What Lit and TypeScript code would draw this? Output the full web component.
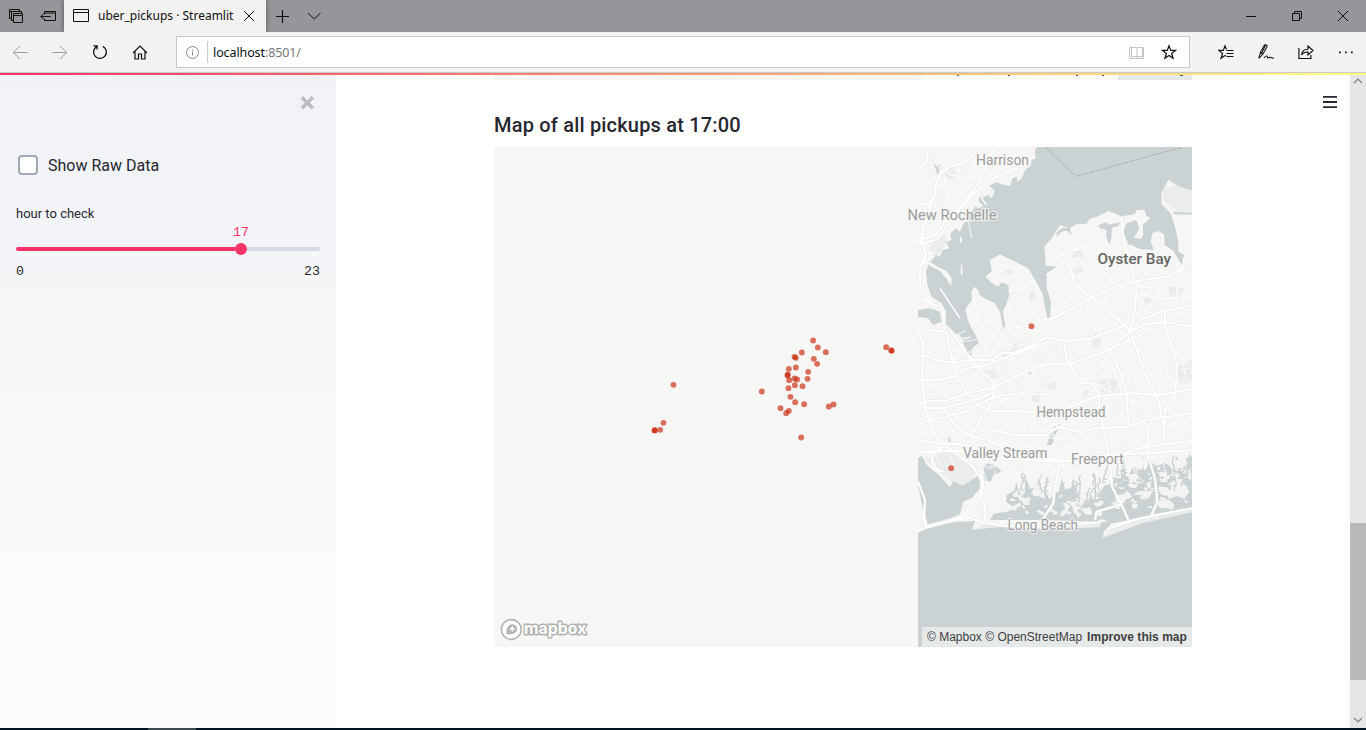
import { LitElement, html, svg, css } from "lit";
import { customElement } from "lit/decorators.js";

type Pt = [number, number];

/* Small deterministic generator for the fine map texture. */
function rng(seed: number) {
  let s = seed;
  return () => {
    s = (s * 1664525 + 1013904223) % 4294967296;
    return s / 4294967296;
  };
}

/* Map artwork is drafted at three times its size; the origin is (900,145). */
const SOUND =
  "M410 6L404 20L408 40L395 45L392 62L375 75L365 100L350 112L352 95L338 100L330 122L305 118L290 112L268 122L284 140L274 160L262 150L250 158L238 148L236 168L250 182L238 190L225 185L215 200L200 205L204 222L188 240L180 262L168 250L150 268L155 285L140 292L148 310L128 315L120 335L104 328L98 345L90 352L128 372L142 380L155 400L154 424L146 412L132 392L118 375L100 366L86 358L78 380L82 420L95 455L125 475L138 500L138 538L172 570L180 570L195 606L208 634L216 630L218 608L236 594L228 572L212 545L202 520L196 495L204 480L216 466L214 440L222 425L235 435L240 452L265 465L285 475L300 500L310 555L316 540L308 500L318 480L328 450L325 420L305 412L294 425L276 415L256 395L275 378L270 345L300 328L345 350L385 370L402 400L425 440L434 480L442 520L450 515L453 470L440 430L440 385L470 365L438 362L433 305L455 280L480 240L508 250L530 238L560 236L568 222L590 215L625 198L665 214L702 208L712 195L735 196L738 212L752 218L738 232L728 238L730 270L722 282L702 278L718 250L708 225L680 235L670 260L686 300L720 312L762 315L752 290L757 264L775 258L792 268L794 300L820 318L836 345L850 362L852 330L835 320L835 290L825 245L812 205L785 178L784 145L805 105L840 125L876 136L876 6Z";

const OCEAN =
  "M54 1165L82 1150L160 1132L225 1128L216 1154L300 1146L440 1155L600 1146L603 1132L640 1128L612 1160L608 1178L680 1152L720 1136L876 1102L876 1506L54 1506Z";

const BAYS = [
  "M54 940L66 932L80 960L110 985L142 1018L150 1026L160 1008L188 1022L215 1005L238 990L240 1030L215 1060L190 1070L180 1108L150 1120L84 1138L66 1080L54 1020Z",
  "M250 970L262 955L290 962L304 980L280 990L272 1010L254 1006Z",
  "M320 1050L345 1035L348 1010L356 1035L374 1030L380 1003L390 1032L412 1022L416 998L424 1036L444 1050L476 1040L486 1000L494 1034L514 1028L519 1005L528 1046L560 1042L574 1062L600 1048L612 1022L640 1014L640 996L662 1002L684 994L700 966L722 976L740 972L748 946L766 962L786 958L792 936L808 954L822 950L830 934L844 954L862 938L876 936L876 1095L700 1122L640 1135L605 1122L590 1130L440 1125L270 1125L282 1106L320 1100L345 1090L318 1070Z",
  "M54 495L90 490L120 500L124 530L100 540L84 520L54 515Z",
  "M108 75L100 55L112 66L120 58L120 75L112 90Z",
  "M595 240L620 232L625 240L660 232L655 244L636 248L634 280L628 298L618 275L620 255L600 250Z",
  "M470 262L485 250L510 248L514 270L500 256L482 262L470 276Z",
  "M440 900L446 880L462 845L482 838L470 860L455 900Z",
  "M820 200L876 203L876 209L820 208Z",
  "M310 630L320 630L320 642L310 642Z",
  "M385 680L394 680L392 688L386 688Z",
  "M144 885L148 872L153 885L149 895Z",
];

const MAJOR = [
  "M54 175L80 180L102 160L108 120L120 85L150 65L200 50L220 30L235 10",
  "M60 300L75 230L95 170L106 150",
  "M54 290L110 265L140 225L200 165L230 120L250 80L270 30L290 8",
  "M54 302L112 282L150 230L215 150L280 100L350 70L375 45",
  "M54 70L72 60L82 40L84 6",
  "M60 360L80 350L90 335L105 335",
  "M70 240L66 290L78 330L60 370L60 420L75 455L100 478L125 485L130 495L132 560",
  "M54 458L100 478",
  "M482 348L500 352L512 372L525 420L575 458L600 478L640 510L690 558L712 620L740 700L778 770L790 845",
  "M440 528L480 510L520 488L570 460L650 425L700 410L800 395L850 372L852 340L876 325",
  "M665 220L666 250L675 300L690 345L700 390L710 420L705 500L688 560L630 615",
  "M325 555L340 548L390 542L440 520",
  "M690 560L730 520L790 500L876 480",
  "M700 555L740 537L800 532L876 545",
  "M795 490L795 540L800 560L820 615L832 660L824 755L796 795L790 885",
  "M54 550L70 600L66 690L75 790L110 880L115 900",
  "M54 638L80 632L110 648L170 652L210 645L280 645L300 625L340 623L400 600L440 577L500 587L570 582L610 565L680 540",
  "M492 585L500 645L515 665L536 712L580 716L596 750L600 805L620 895L630 955L636 1025L665 1080L685 1125",
  "M54 705L110 705L160 695L200 670L260 660L310 640L350 626L440 592",
  "M54 775L90 767L140 767L200 745L270 730L360 690L430 660L515 655L600 625L700 580L760 550",
  "M80 555L140 560L150 615L170 695L200 745L240 785L280 797L400 800",
  "M150 555L200 625L250 685L285 715L275 775L240 825L215 875",
  "M54 840L80 828L200 800L260 765L300 752L370 744",
  "M75 790L130 790L160 835L215 876L260 884L320 912",
  "M120 790L200 772L250 755L285 740",
  "M280 855L340 870L440 870L475 845L540 863L580 850L680 845L740 825L876 804",
  "M54 885L110 895L180 898L260 918L380 935L480 945L540 955L640 935L740 905L876 888",
  "M54 920L190 918L290 940L480 950L620 930L740 925L876 915",
  "M140 905L180 935L220 965L245 1005L250 1020L240 1045L255 1085L255 1130",
  "M130 905L100 925L95 945L110 975L130 980",
  "M480 800L560 765L600 752L700 745L780 750L876 732",
  "M630 615L650 655L680 745L685 835L700 845",
  "M730 825L745 855L745 935L765 1000L772 1070L755 1110",
  "M54 1010L75 1065L72 1120L80 1145",
  "M54 1155L160 1125L210 1118L250 1133L300 1141L400 1147L600 1132",
  "M240 975L250 1015L245 1045L210 1080L195 1110L155 1126",
  "M480 955L465 1025L460 1075L430 1120",
  "M585 1125L590 1100L665 1078",
  "M635 1148L700 1125L760 1112L876 1090",
];

const MINOR = [
  "M275 350L320 365L350 375L365 440L385 490L402 502L402 540",
  "M325 440L360 430L405 405M330 470L330 500L315 520",
  "M365 440L400 410L430 460M400 500L430 550",
  "M260 470L265 505L250 540L262 600M285 490L300 560",
  "M225 470L235 510L215 540",
  "M440 390L470 370L520 320L580 280L590 225",
  "M460 340L530 310L580 300L600 305L625 320L700 350",
  "M520 340L500 400L495 450L505 500L480 560",
  "M560 380L530 440L470 500L440 560",
  "M615 420L615 500L580 560L560 620",
  "M700 410L640 440L590 500",
  "M790 395L770 450L740 500L760 560",
  "M845 375L830 440L835 520",
  "M130 80L150 190M200 55L215 120L260 180",
  "M85 30L120 45L150 90L230 100",
  "M120 430L180 520M90 360L130 380L150 405",
  "M690 300L740 330L790 360",
  "M600 350L620 400L690 440L780 460L876 455",
  "M710 425L780 430L850 410",
  "M715 625L665 705L660 760M715 630L790 750",
  "M280 555L300 600L260 640M350 555L360 620",
  "M360 748L460 748M360 740L400 780L405 840",
  "M540 700L600 720L650 760M610 600L660 720",
];

const PARKS = [
  "M145 65L165 75L170 90L150 105L130 95Z",
  "M95 285L135 270L145 290L115 330L90 315Z",
  "M785 135L850 110L876 140L876 200L830 200L795 170Z",
  "M590 682L605 700L655 705L650 735L615 750L598 725Z",
  "M835 655L876 645L876 710L845 720L832 700Z",
  "M340 595L360 590L380 610L350 630L335 620Z",
  "M570 575L590 560L605 590L585 610Z",
  "M440 715L465 710L470 735L445 735Z",
  "M395 750L415 748L420 770L396 770Z",
  "M548 740L565 732L575 755L550 760Z",
  "M78 945L140 910L230 965L220 1005L180 1030Z",
  "M250 680L285 672L295 700L265 705Z",
  "M390 440L402 430L406 460L392 470Z",
  "M520 370L545 362L550 380L525 390Z",
  "M805 420L850 430L840 460L810 455Z",
  "M520 320L550 315L548 335L515 338Z",
  "M315 375L335 370L340 385L325 390Z",
  "M730 460L750 455L755 470L735 478Z",
  "M216 1154L260 1136L320 1146L600 1130L602 1145L440 1158Z",
  "M608 1178L640 1144L720 1125L876 1090L876 1104L720 1138Z",
];

/* Local streets: short, loosely gridded strokes with a lean that varies by area. */
function streets(): string {
  const r = rng(7);
  let d = "";
  const add = (x0: number, y0: number, x1: number, y1: number, n: number, len: number) => {
    for (let i = 0; i < n; i++) {
      const x = x0 + r() * (x1 - x0);
      const y = y0 + r() * (y1 - y0);
      const lean = -0.25 + (r() - 0.5) * 0.3 + (r() < 0.5 ? 0 : Math.PI / 2);
      const l = len * (0.4 + r());
      const bend = (r() - 0.5) * 10;
      const dx = Math.cos(lean) * l;
      const dy = Math.sin(lean) * l;
      d += `M${x.toFixed(0)} ${y.toFixed(0)}q${(dx / 2 + bend).toFixed(0)} ${(dy / 2 + bend).toFixed(0)} ${dx.toFixed(0)} ${dy.toFixed(0)}`;
    }
  };
  add(54, 600, 876, 930, 330, 70);
  add(240, 900, 480, 990, 45, 45);
  add(480, 890, 740, 960, 40, 40);
  add(460, 380, 860, 600, 60, 60);
  add(54, 20, 200, 260, 22, 60);
  add(54, 560, 180, 620, 14, 50);
  return d;
}

/* Salt-marsh islands: ragged blobs snapped to a coarse cell. */
function marsh(): string {
  const r = rng(41);
  let d = "";
  const snap = (v: number) => Math.round(v / 3) * 3;
  const island = (x: number, y: number, rx: number, ry: number) => {
    const n = 9;
    const tilt = (r() - 0.5) * 1.6;
    for (let i = 0; i < n; i++) {
      const a = (i / n) * Math.PI * 2;
      const k = 0.45 + r() * 0.75;
      const px = Math.cos(a) * rx * k;
      const py = Math.sin(a) * ry * k;
      const qx = x + px * Math.cos(tilt) - py * Math.sin(tilt);
      const qy = y + px * Math.sin(tilt) + py * Math.cos(tilt);
      d += `${i ? "L" : "M"}${snap(qx)} ${snap(qy)}`;
    }
    d += "Z";
  };
  const area = (x0: number, x1: number, y0: number, y1: number, n: number, size: number) => {
    for (let i = 0; i < n; i++) {
      const s = size * (0.35 + r() * r() * 1.4);
      island(x0 + r() * (x1 - x0), y0 + r() * (y1 - y0), s * (0.8 + r() * 0.7), s * (0.5 + r() * 0.4));
    }
  };
  area(335, 470, 1035, 1105, 24, 17);
  area(480, 600, 1045, 1110, 26, 15);
  area(640, 760, 1000, 1090, 34, 15);
  area(775, 870, 950, 1085, 26, 19);
  area(690, 870, 970, 1010, 16, 12);
  return d;
}

function creeks(): string {
  const r = rng(99);
  let d = "";
  for (let i = 0; i < 34; i++) {
    const x = Math.round(345 + r() * 525);
    const y = Math.round((x < 600 ? 1035 : 985) - r() * 60);
    d += `M${x} ${y}`;
    for (let j = 0; j < 4; j++) {
      const side = Math.round((r() - 0.5) * 16);
      d += `l${side} 6v${Math.round(4 + r() * 9)}`;
      if (r() > 0.6) d += `h${side > 0 ? -9 : 9}m${side > 0 ? 9 : -9} 0`;
    }
  }
  return d;
}

const STREETS = streets();
const MARSH = marsh();
const CREEKS = creeks();

const PICKUPS: Pt[] = [
  [519, 46], [533, 67], [557, 81], [485, 82], [463, 95], [467, 98], [521, 101], [531, 116],
  [467, 127], [446, 131], [442, 151], [443, 148], [504, 140], [463, 160], [471, 163],
  [447, 165], [502, 161], [464, 180], [487, 183], [445, 189], [451, 215], [465, 231], [492, 237],
  [421, 249], [446, 257], [438, 264], [566, 244], [580, 238], [483, 337], [365, 199], [100, 179],
  [70, 293], [60, 314], [43, 315], [44, 316], [738, 66], [753, 75], [755, 77],
  [1174, 3], [933, 429],
];

const LABELS: { t: string; x: number; y: number; w: number; big?: boolean }[] = [
  { t: "Harrison", x: 976, y: 164.5, w: 53 },
  { t: "New Rochelle", x: 907.5, y: 220, w: 89 },
  { t: "Oyster Bay", x: 1097.5, y: 264, w: 73.5, big: true },
  { t: "Hempstead", x: 1036.5, y: 417, w: 69 },
  { t: "Valley Stream", x: 963, y: 457.5, w: 84.5 },
  { t: "Freeport", x: 1071, y: 464, w: 52.5 },
  { t: "Long Beach", x: 1007.5, y: 530, w: 70.5 },
];

@customElement("pickup-map")
class PickupMap extends LitElement {
  static styles = css`
    :host { display: grid; width: 698px; height: 500px; background: #f6f6f4; }
    .layer { grid-area: 1 / 1; }
    svg { display: block; }
    .label { font-family: Roboto, "Noto Sans", sans-serif; font-size: 14px; fill: #9d9d9f; stroke: #f6f6f4; stroke-opacity: .8; stroke-width: 2.4px; paint-order: stroke; stroke-linejoin: round; }
    .label.big { font-size: 15.5px; font-weight: 500; fill: #666; }
    .brand { font-family: Inter, sans-serif; font-size: 16.5px; font-weight: 700; fill: #fff; stroke: #b0b0af; stroke-width: 2.8px; paint-order: stroke; stroke-linejoin: round; }
    .credit { place-self: end; display: flex; align-items: center; gap: 5px; box-sizing: border-box; width: 270px; height: 20px; padding-left: 5px; background: #e5e9ea; font: 12px/20px "Liberation Sans", sans-serif; color: #404040; white-space: nowrap; z-index: 1; }
    .credit b { letter-spacing: .03px; }
  `;

  render() {
    return html`
      <svg class="layer" width="698" height="500" viewBox="494 147 698 500">
        <defs><clipPath id="tile"><rect x="918" y="147" width="274" height="500"></rect></clipPath></defs>
        <g clip-path="url(#tile)">
          <g transform="translate(900 145) scale(.33333)" fill="none" stroke-linejoin="round">
            ${PARKS.map((d) => svg`<path d=${d} fill="#eaedec"></path>`)}
            <path d=${SOUND} fill="#cad2d4"></path>
            <path d=${OCEAN} fill="#cad2d4"></path>
            ${BAYS.map((d) => svg`<path d=${d} fill="#cad2d4"></path>`)}
            <path d="M180 275h6v18h-6zM182 355l6 10v26h-6zM272 125l12 12-8 18-18-12zM330 488h6v8h-6z" fill="#f3f4f3"></path>
            <path d=${MARSH} fill="#f3f4f2"></path>
            <path d=${CREEKS} stroke="#cad2d4" stroke-width="4"></path>
            <path d=${STREETS} stroke="#e9eceb" stroke-width="4.5" opacity=".5"></path>
            <path d=${STREETS} stroke="#fff" stroke-width="2.4" opacity=".75"></path>
            <path d=${MINOR.join("")} stroke="#e6eaea" stroke-width="6" opacity=".6"></path>
            <path d=${MINOR.join("")} stroke="#fff" stroke-width="3.6"></path>
            <path d=${MAJOR.join("")} stroke="#e3e8e8" stroke-width="9.5" opacity=".65"></path>
            <path d=${MAJOR.join("")} stroke="#fff" stroke-width="5.8"></path>
            <path d="M436 6L528 94L845 7" stroke="#b0aeb0" stroke-width="2.8" stroke-dasharray="18 3"></path>
          </g>
        </g>
        ${LABELS.map((l) => svg`<text class=${l.big ? "label big" : "label"} x=${l.x} y=${l.y} textLength=${l.w} lengthAdjust="spacingAndGlyphs">${l.t}</text>`)}
        ${PICKUPS.map(([x, y]) => svg`<circle cx=${640 + (x + 0.5) / 3} cy=${325 + (y + 0.5) / 3} r="2.9" fill="#c81e00" fill-opacity=".63"></circle>`)}
        <circle cx="511.300" cy="629.500" r="9.900" fill="#fff" stroke="#b4b4b3" stroke-width="1.600"></circle>
        <path d="M506.700 634.200c-.7-4 .2-7.300 2.600-9 2.200-1.500 5-1.200 6.600.6 1.700 1.900 1.600 4.700-.3 6.500-2.100 2-5.200 2.500-8.900 1.900z" fill="#b4b4b3"></path>
        <path d="M512.300 625.500l1.100 2.400 2.400 1-2.400 1.100-1.100 2.400-1.100-2.400-2.400-1.100 2.400-1z" fill="#fff"></path>
        <text class="brand" x="524" y="634" textLength="62.500" lengthAdjust="spacingAndGlyphs">mapbox</text>
      </svg>
      <div class="layer credit"><span>© Mapbox © OpenStreetMap</span><b>Improve this map</b></div>
    `;
  }
}

const icon = (body: unknown, w = 16, h = 16) =>
  html`<svg width=${w} height=${h} viewBox="0 0 ${w} ${h}" fill="none" stroke="currentColor" stroke-width="1">${body}</svg>`;

@customElement("browser-chrome")
class BrowserChrome extends LitElement {
  static styles = css`
    :host { display: block; font-family: "Noto Sans", "Open Sans", sans-serif; color: #111; }
    svg { display: block; flex: none; }
    .titlebar { display: flex; height: 32px; background: #959699; overflow: hidden; }
    .cell { display: flex; align-items: center; justify-content: center; flex: none; width: 32px; }
    .win { width: 46px; }
    .nav { width: 40px; }
    .off { color: #a0a0a0; }
    .tab { display: flex; align-items: center; box-sizing: border-box; width: 202px; padding: 0 9px 0 9px; background: #f2f2f2; box-shadow: 0 0 5px rgba(0, 0, 0, .45); }
    .title { flex: 1; margin-left: 9px; font-size: 12px; line-height: 32px; overflow: hidden; white-space: nowrap; letter-spacing: 0; }
    .fill { flex: 1; }
    .toolbar { display: flex; box-sizing: border-box; height: 41px; background: #f2f2f2; border-bottom: 1px solid #c9cacb; }
    .address { display: flex; align-items: stretch; box-sizing: border-box; width: 1014px; height: 32px; margin: 4px 16px 0; border: 1px solid #c9cacb; background: #fff; }
    .info { width: 30px; color: #888; }
    .url { flex: 1; margin: 4px 0; padding-left: 5px; border-left: 1px solid #ccc; font-size: 12.500px; line-height: 24px; height: 22px; letter-spacing: -.1px; }
    .url span { color: #777; }
    .book { width: 33px; color: #c4c4c4; }
    .star { width: 32px; margin-right: 4px; }
  `;

  render() {
    return html`
      <div class="titlebar">
        <div class="cell">${icon(svg`<path d="M3.500 10.500h-2v-9h10v2M1.500 3.500h10M5.500 12.500h-2v-9M3.500 3.500h10v2" stroke="#111"></path><path d="M5.500 5.500h9v9h-9zM5.500 7.500h9"></path>`)}</div>
        <div class="cell">${icon(svg`<path d="M4.500 6.500v-3h11v9h-11v-2M4.500 5h11M.8 8.500h10M3.800 5.500l-3 3 3 3"></path>`)}</div>
        <div class="tab">
          ${icon(svg`<path d="M.5 1.500h15v12h-15zM.5 4.500h15"></path>`)}
          <div class="title">uber_pickups · Streamlit</div>
          ${icon(svg`<path d="M3 3l10 10M13 3L3 13"></path>`)}
        </div>
        <div class="cell">${icon(svg`<path d="M8.500 2v13M2 8.500h13" stroke-width="1.200"></path>`)}</div>
        <div class="cell">${icon(svg`<path d="M2 5l6.300 6L14.500 5"></path>`)}</div>
        <div class="fill"></div>
        <div class="cell win">${icon(svg`<path d="M3 8.500h10"></path>`)}</div>
        <div class="cell win">${icon(svg`<path d="M3.500 5.500h7v7h-7zM5.500 5.500v-2h7v7h-2"></path>`)}</div>
        <div class="cell win">${icon(svg`<path d="M3 3l10 10M13 3L3 13"></path>`)}</div>
      </div>
      <div class="toolbar">
        <div class="cell nav off">${icon(svg`<path d="M1 8.500h14.500M8 2L1.200 8.500 8 15"></path>`)}</div>
        <div class="cell nav off">${icon(svg`<path d="M.5 8.500H15M8 2l6.800 6.500L8 15"></path>`)}</div>
        <div class="cell nav">${icon(svg`<path d="M10.800 2.300A6.400 6.400 0 1 1 4.600 2.600M1.500 1.800h3.600v3.700" stroke-width="1.300"></path>`)}</div>
        <div class="cell nav">${icon(svg`<path d="M1 9l7-7 7 7M3 7.500v7.500h3.500v-5h3v5H13V7.500" stroke-width="1.200"></path>`)}</div>
        <div class="address">
          <div class="cell info">${icon(svg`<circle cx="8.500" cy="8.500" r="6"></circle><path d="M8.500 7.500v4M8.500 5.300v1.200"></path>`)}</div>
          <div class="url">localhost<span>:8501/</span></div>
          <div class="cell book">${icon(svg`<path d="M7.500 3.500h-5v9h5v1h1v-1h5v-9h-5M8 3v10M2.500 2.500v10M2.500 3.500h-2v11h14v-11h-1"></path>`)}</div>
          <div class="cell star">${icon(svg`<path d="M8 1.800l1.700 4.600h4.800l-3.900 3 1.500 4.800L8 11.400l-4.100 2.800 1.500-4.800-3.900-3h4.800z" stroke-width="1.200"></path>`)}</div>
        </div>
        <div class="cell nav">${icon(svg`<path d="M8.500 5.500L7 1.800 5.300 6.400H.8l3.700 3L3 14.200l4-2.800M8.500 6.500h7M8.500 9.500h7M8.500 12.500h7M7 11.400l1 .7" stroke-width="1.200"></path>`)}</div>
        <div class="cell nav">${icon(svg`<path d="M.8 14.300L2.300 8.600 6.200 1.400C7 .2 9.700 1 9 2.700L4.800 10.300.8 14.300M2.300 8.600l2.500 1.700M7.600 1.200L3.600 9M6 13.800c1.500-1.600 3-2.400 3.300-1.400s-.2 1.700 1 1.500 1.700-1.100 2.600-.6.900 1.300 2.900.6" stroke-width="1.050"></path>`)}</div>
        <div class="cell nav">${icon(svg`<path d="M.9 4v10.500h12V11M3.500 11c.5-4 3-5.800 6.500-5.800V2l5 4.500-5 4.500V8c-3 0-5 .8-6.500 3z" stroke-width="1.150"></path>`)}</div>
        <div class="cell nav">${icon(svg`<path d="M1 7.500h1.700v1.700H1zM7 7.500h1.700v1.700H7zM13 7.500h1.700v1.700H13z" fill="currentColor" stroke="none"></path>`)}</div>
      </div>
    `;
  }
}

@customElement("side-panel")
class SidePanel extends LitElement {
  static styles = css`
    :host { display: flex; flex-direction: column; box-sizing: border-box; width: 336px; height: 653px; padding: 20px 16px 0; background: linear-gradient(#f0f2f6, #fafbfb 80%, #fbfbfb); color: #262730; font-family: Roboto, "Noto Sans", sans-serif; }
    .close { align-self: flex-end; margin-right: 5px; width: 16px; height: 16px; }
    .close svg { display: block; }
    .check { display: flex; align-items: center; gap: 10px; margin: 44px 0 0 2px; height: 20px; font-size: 16px; letter-spacing: 0; }
    .box { box-sizing: border-box; width: 20px; height: 20px; border: 2px solid #a3a8b8; border-radius: 4px; background: #fff; }
    .name { margin-top: 30px; height: 18px; font-size: 13px; line-height: 18px; letter-spacing: 0; }
    .mono { font-family: "Liberation Mono", monospace; font-size: 13.300px; line-height: 18px; }
    .value { width: 450px; margin-top: 1px; text-align: center; color: #f63366; height: 18px; }
    .slider { display: flex; align-items: center; height: 12px; margin-top: 1px; }
    .done { width: 219px; height: 4px; border-radius: 2px 0 0 2px; background: #f63366; }
    .knob { width: 12px; height: 12px; border-radius: 6px; background: #f63366; }
    .rest { flex: 1; height: 4px; border-radius: 0 2px 2px 0; background: #d5dae5; }
    .ends { display: flex; justify-content: space-between; margin-top: 8px; }
  `;

  render() {
    return html`
      <div class="close"><svg width="16" height="16" viewBox="0 0 16 16"><path d="M2.800 2.300l11 11M13.800 2.300l-11 11" stroke="#bcbdc1" stroke-width="3.600"></path></svg></div>
      <div class="check"><div class="box"></div><span>Show Raw Data</span></div>
      <div class="name">hour to check</div>
      <div class="value mono">17</div>
      <div class="slider"><div class="done"></div><div class="knob"></div><div class="rest"></div></div>
      <div class="ends mono"><span>0</span><span>23</span></div>
    `;
  }
}

@customElement("app-root")
class AppRoot extends LitElement {
  static styles = css`
    :host { display: block; width: 1366px; height: 730px; overflow: hidden; background: #fff; }
    .ribbon { height: 2px; background: linear-gradient(90deg, #f63366, #fffd80); }
    .page { display: flex; height: 653px; }
    .content { width: 698px; margin-left: 158px; }
    .previous { display: flex; height: 5px; background: #f6f6f4; }
    .previous svg { margin-left: 428px; display: block; }
    h3 { margin: 31px 0 8px; height: 28px; font: 500 20px/28px Roboto, "Noto Sans", sans-serif; letter-spacing: .19px; color: #262730; white-space: nowrap; }
    .menu { margin: 20px 12px 0 130px; width: 16px; height: 14px; }
    .scroll { display: flex; flex-direction: column; width: 16px; height: 653px; background: #e6e6e6; }
    .scroll svg { display: block; }
    .thumb { height: 157px; margin-top: 431px; background: #b8b8b8; }
    .down { margin-top: auto; }
    .taskbar { display: flex; height: 2px; background: #011420; }
    .active { width: 48px; margin-left: 148px; background: #3b4a4c; }
  `;

  render() {
    return html`
      <browser-chrome></browser-chrome>
      <div class="ribbon"></div>
      <div class="page">
        <side-panel></side-panel>
        <div class="content">
          <div class="previous">
            <svg width="270" height="5" viewBox="0 0 270 5"><path d="M0 0h196v5H0z" fill="#fcfcfb"></path><path d="M196 0h74v5h-74z" fill="#e5e9ea"></path><path d="M35 0h2v1h-2zM86 0h2v1h-2zM154 0h2v1h-2zM180 0h2v1h-2zM258 0h3v1h-3z" fill="#555"></path></svg>
          </div>
          <h3>Map of all pickups at 17:00</h3>
          <pickup-map></pickup-map>
        </div>
        <div class="menu"><svg width="16" height="14" viewBox="0 0 16 14"><path d="M1 1.900h14M1 7h14M1 12.100h14" stroke="#262730" stroke-width="1.900"></path></svg></div>
        <div class="scroll">
          <svg width="16" height="17" viewBox="0 0 16 17"><path d="M4 8l4-4 4 4" fill="none" stroke="#808080" stroke-width="1.200"></path></svg>
          <div class="thumb"></div>
          <svg class="down" width="16" height="16" viewBox="0 0 16 16"><path d="M4 6l4 4 4-4" fill="none" stroke="#808080" stroke-width="1.200"></path></svg>
        </div>
      </div>
      <div class="taskbar"><div class="active"></div></div>
    `;
  }
}
